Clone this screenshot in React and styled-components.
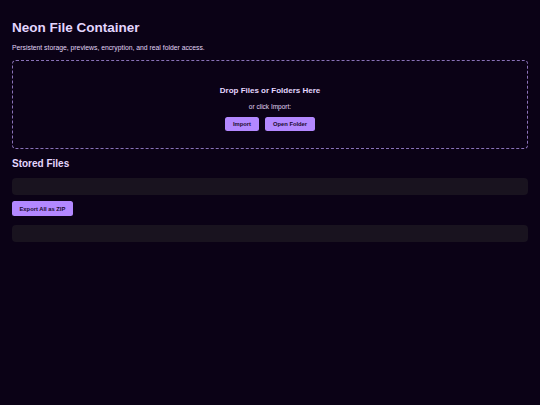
import React from 'react';
import styled, { createGlobalStyle } from 'styled-components';

const GlobalStyle = createGlobalStyle`
  html, body {
    margin: 0;
    padding: 0;
    background: #0b0216;
  }
  body {
    font-family: 'Liberation Sans', Arial, sans-serif;
    color: #e4d6ff;
  }
`;

const Page = styled.div`
  min-height: 405px;
  padding: 18px 12px;
  box-sizing: border-box;
`;

const Title = styled.h1`
  margin: 0 0 5px;
  font-size: 13.5px;
  line-height: 20px;
  font-weight: 700;
  color: #e4d6ff;
`;

const Subtitle = styled.p`
  margin: 0 0 7px;
  font-size: 6.8px;
  line-height: 10px;
  color: #e0d4f5;
`;

const DropZone = styled.div`
  height: 89px;
  box-sizing: border-box;
  padding-top: 7px;
  border: 1px dashed #8a72b8;
  border-radius: 4px;
  display: flex;
  flex-direction: column;
  align-items: center;
  justify-content: center;
  margin-bottom: 8px;
`;

const DropTitle = styled.div`
  font-size: 8px;
  font-weight: 700;
  line-height: 10px;
  margin-bottom: 6px;
  color: #e4d6ff;
`;

const DropHint = styled.div`
  font-size: 6.5px;
  line-height: 10px;
  margin-bottom: 5px;
  color: #e0d4f5;
`;

const ButtonRow = styled.div`
  display: flex;
  gap: 6px;
`;

const Button = styled.button`
  font-family: 'Liberation Sans', Arial, sans-serif;
  font-size: 5.8px;
  font-weight: 700;
  color: #1a0a2e;
  background: #b388ff;
  border: none;
  border-radius: 2.5px;
  height: ${(p) => p.$h || 14}px;
  padding: 0 ${(p) => p.$pad || 8}px;
  cursor: pointer;
`;

const SectionTitle = styled.h2`
  margin: 0 0 7px;
  font-size: 10px;
  line-height: 14px;
  font-weight: 700;
  color: #e4d6ff;
`;

const Panel = styled.div`
  height: 17px;
  border-radius: 4px;
  background: #19131f;
  margin-bottom: 6px;
`;

const Actions = styled.div`
  display: flex;
  margin-bottom: 9px;
`;

export default function App() {
  return (
    <>
      <GlobalStyle />
      <Page>
        <Title>Neon File Container</Title>
        <Subtitle>Persistent storage, previews, encryption, and real folder access.</Subtitle>
        <DropZone>
          <DropTitle>Drop Files or Folders Here</DropTitle>
          <DropHint>or click Import:</DropHint>
          <ButtonRow>
            <Button>Import</Button>
            <Button>Open Folder</Button>
          </ButtonRow>
        </DropZone>
        <SectionTitle>Stored Files</SectionTitle>
        <Panel />
        <Actions>
          <Button $pad={7.5} $h={15}>Export All as ZIP</Button>
        </Actions>
        <Panel />
      </Page>
    </>
  );
}
